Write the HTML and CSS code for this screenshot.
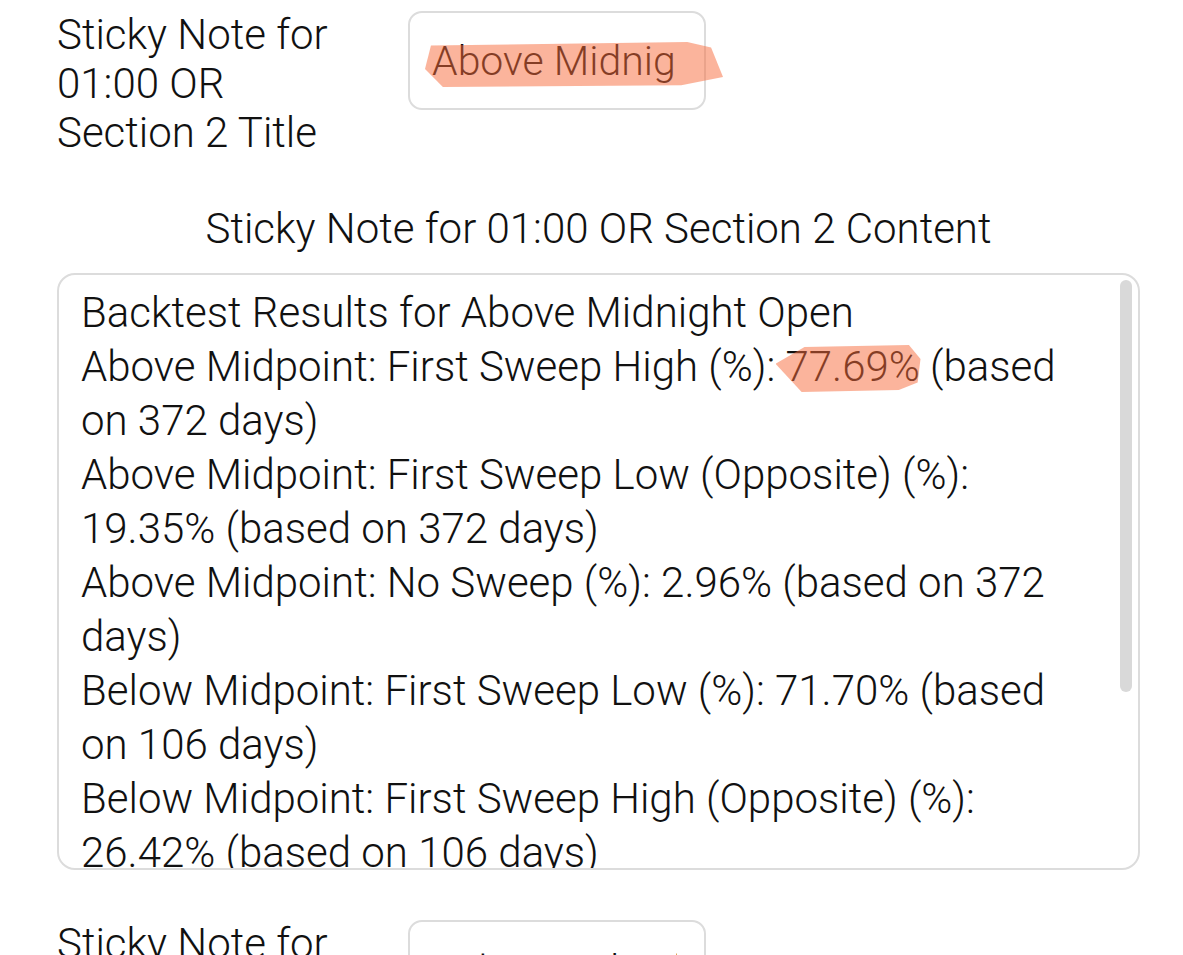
FILE: index.html
```html
<!DOCTYPE html>
<html lang="en">
<head>
    <meta charset="UTF-8">
    <meta name="viewport" content="width=device-width, initial-scale=1.0">
    <title>Sticky Notes</title>
    <link rel="stylesheet" href="styles.css">
</head>
<body>
    <div class="page">
        <div class="field-row">
            <div class="field-label">Sticky Note for 01:00 OR Section 2 Title</div>
            <div class="field-input">
                <div class="input-inner">Above Midnight Open</div>
                <!-- highlighter stroke -->
                <span class="marker marker-title"></span>
            </div>
        </div>

        <div class="section-heading">Sticky Note for 01:00 OR Section 2 Content</div>

        <div class="note-box">
            <div class="note-text">
                <div>Backtest Results for Above Midnight Open</div>
                <div>Above Midpoint: First Sweep High (%): <span class="hl">77.69%<span class="marker marker-value"></span></span> (based on 372 days)</div>
                <div>Above Midpoint: First Sweep Low (Opposite) (%): 19.35% (based on 372 days)</div>
                <div>Above Midpoint: No Sweep (%): 2.96% (based on 372 days)</div>
                <div>Below Midpoint: First Sweep Low (%): 71.70% (based on 106 days)</div>
                <div>Below Midpoint: First Sweep High (Opposite) (%): 26.42% (based on 106 days)</div>
                <div>Below Midpoint: No Sweep (%): 1.89% (based on 106 days)</div>
            </div>
            <div class="scroll-thumb"></div>
        </div>

        <div class="field-row field-row-next">
            <div class="field-label">Sticky Note for 02:00 OR Section 3 Title</div>
            <div class="field-input">
                <div class="input-inner">Below Midnight Open</div>
            </div>
        </div>
    </div>
</body>
</html>
```

FILE: styles.css
```css
body {
    margin: 0;
    padding: 0;
    background-color: #ffffff;
    font-family: Roboto, "Noto Sans", sans-serif;
    font-weight: 300;
    color: #111111;
}
.page {
    padding: 10px 43px 0 57px;
}
.field-row {
    display: flex;
    align-items: flex-start;
}
.field-label {
    flex: 0 0 300px;
    margin-right: 51px;
    font-size: 42px;
    line-height: 49px;
}
.field-input {
    position: relative;
    box-sizing: border-box;
    width: 298px;
    height: 99px;
    margin-top: 1px;
    padding: 0 27px 0 22px;
    border: 2px solid #dcdcdc;
    border-radius: 14px;
    display: flex;
    align-items: center;
}
.input-inner {
    overflow: hidden;
    white-space: nowrap;
    font-size: 41px;
    line-height: 50px;
}
.section-heading {
    margin-top: 49px;
    text-align: center;
    font-size: 42px;
    line-height: 46px;
}
.note-box {
    position: relative;
    box-sizing: border-box;
    height: 597px;
    margin-top: 21px;
    padding: 11px 40px 0 22px;
    border: 2px solid #dcdcdc;
    border-radius: 18px;
    overflow: hidden;
}
.note-text {
    font-size: 42px;
    line-height: 54px;
}
.scroll-thumb {
    position: absolute;
    top: 5px;
    right: 6px;
    width: 12px;
    height: 412px;
    border-radius: 6px;
    background-color: #d9d9d9;
}
.field-row-next {
    margin-top: 49px;
}
.hl {
    position: relative;
}
.marker {
    position: absolute;
    background-color: rgba(248, 106, 58, 0.5);
}
.marker-title {
    left: 15px;
    top: 29px;
    width: 298px;
    height: 45px;
    clip-path: polygon(2% 8%, 88% 0, 96% 12%, 100% 78%, 86% 96%, 6% 100%, 0 60%);
}
.marker-value {
    left: -10px;
    top: 3px;
    width: 145px;
    height: 47px;
    clip-path: polygon(0 40%, 20% 4%, 92% 0, 100% 30%, 98% 80%, 85% 96%, 18% 100%);
}
```
